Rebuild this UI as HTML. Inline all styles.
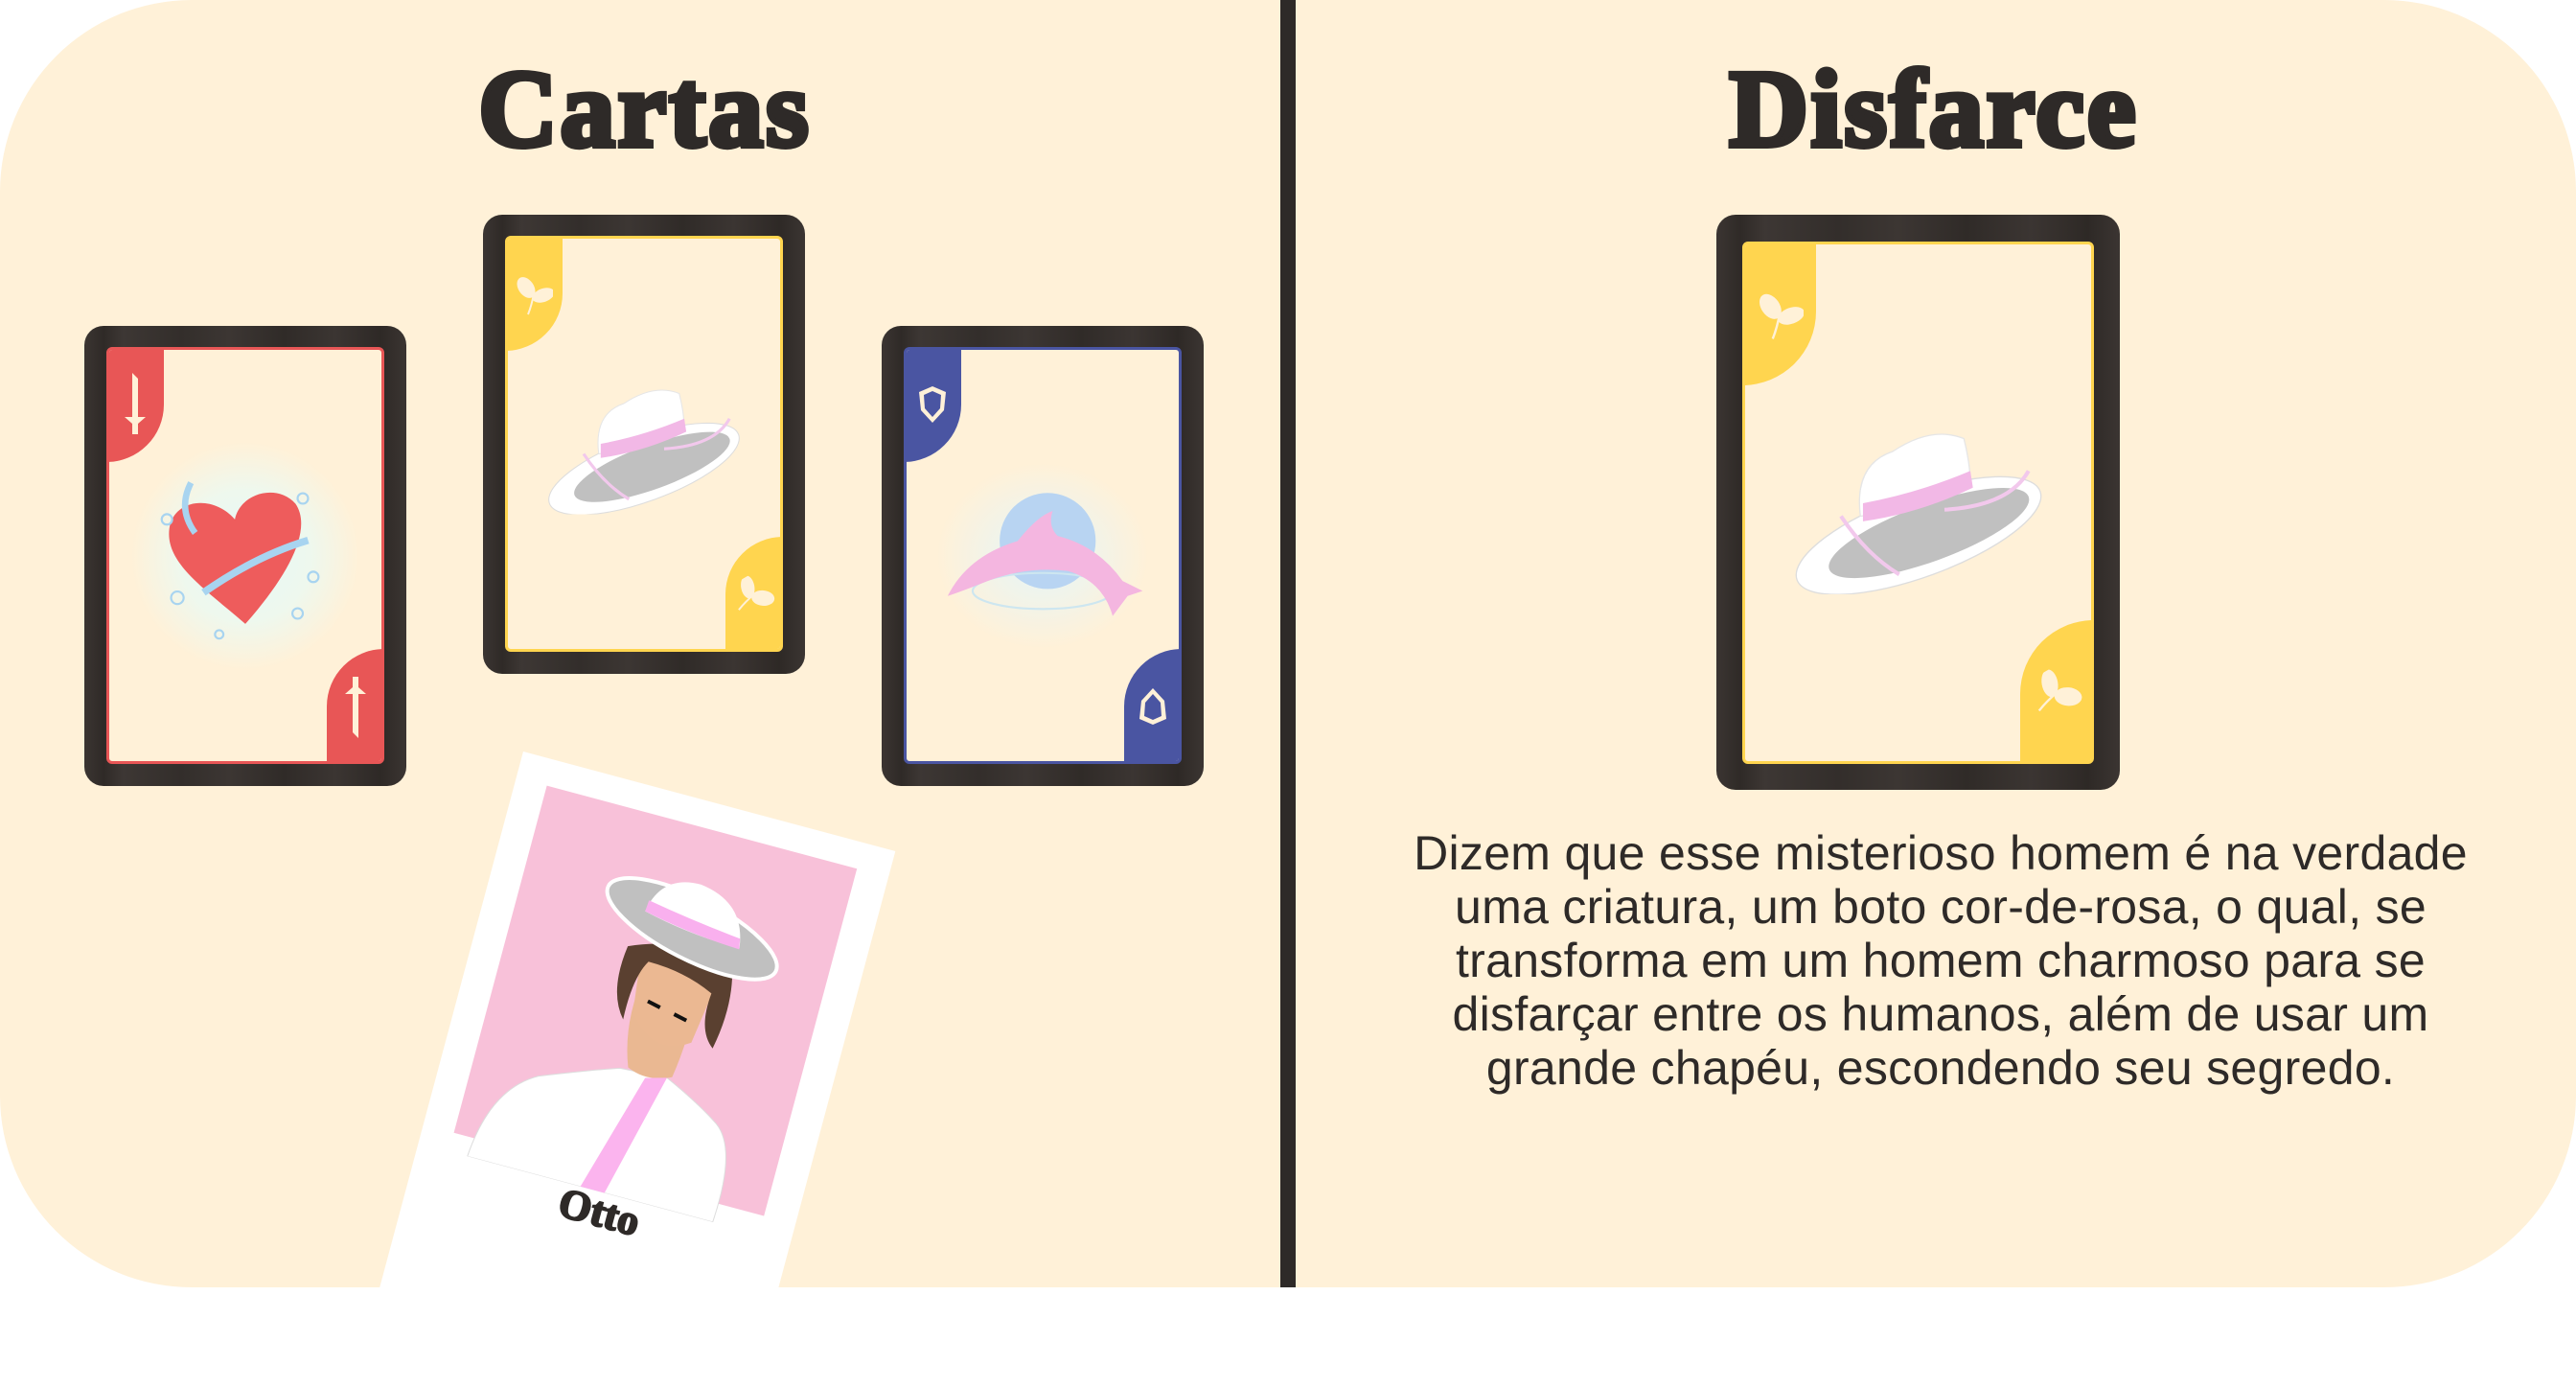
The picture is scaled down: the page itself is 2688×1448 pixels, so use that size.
<!DOCTYPE html>
<html><head><meta charset="utf-8"><style>
*{margin:0;padding:0;box-sizing:border-box}
body{width:2688px;height:1390px;background:#fff;position:relative;overflow:hidden;font-family:"Liberation Sans",sans-serif}
.cream{position:absolute;background:#fff1d8;top:0;height:1343px}
.l{left:0;width:1336px;border-radius:200px 0 0 200px}
.r{left:1352px;width:1336px;border-radius:0 200px 200px 0}
.div{position:absolute;left:1336px;top:0;width:16px;height:1343px;background:#2e2a28}
.title{position:absolute;top:48px;font-family:"Liberation Serif",serif;font-weight:bold;font-size:114px;color:#2e2a28;-webkit-text-stroke:6px #2e2a28;letter-spacing:3px;text-align:center;width:800px}
.card{position:absolute;border-radius:20px;background:linear-gradient(90deg,#3b3532 0,#2f2a27 6%,#3d3734 12%,#332e2b 30%,#3c3633 45%,#302b28 62%,#3b3532 78%,#2e2926 92%,#3b3532 100%)}
.face{position:absolute;background:#fff1d8;border:3px solid;border-radius:6px;overflow:hidden}
.tab{position:absolute;display:flex;align-items:center;justify-content:center}
.tl{left:-3px;top:-3px;border-bottom-right-radius:60px}
.br{right:-3px;bottom:-3px;border-top-left-radius:60px}
.art{position:absolute;left:50%;top:50%;transform:translate(-50%,-50%)}
.desc{position:absolute;left:1390px;width:1270px;top:862px;text-align:center;font-size:50px;line-height:56px;color:#2e2a28;letter-spacing:0.3px}
.pol{position:absolute;left:546px;top:784px;width:402px;height:580px;background:#fff;transform:rotate(15deg);transform-origin:0 0}
.pink{position:absolute;left:33px;top:28px;width:335px;height:375px;background:#f8c1d9}
.otto{position:absolute;left:0;width:100%;top:418px;text-align:center;font-family:"Liberation Serif",serif;font-weight:bold;font-size:44px;color:#2e2a28;-webkit-text-stroke:2px #2e2a28;z-index:2}
.cover{position:absolute;left:0;top:1343px;width:2688px;height:47px;background:#fff}
</style></head><body>
<div class="cream l"></div><div class="cream r"></div><div class="div"></div>
<div class="title" style="left:273px">Cartas</div>
<div class="title" style="left:1618px">Disfarce</div>

<svg width="0" height="0" style="position:absolute"><defs>
<g id="hat">
<ellipse cx="100" cy="95" rx="100" ry="32" transform="rotate(-20 100 95)" fill="#fff" stroke="#ddd"/>
<ellipse cx="108" cy="93" rx="82" ry="22" transform="rotate(-20 108 93)" fill="#c0c0c0"/>
<path d="M55 80 Q50 40 80 30 Q110 10 135 20 Q140 40 140 55 Q100 75 55 80Z" fill="#fff" stroke="#e6e6e6"/>
<path d="M57 70 Q100 62 140 45 L142 58 Q100 78 57 84Z" fill="#f2b8e6"/>
<path d="M40 80 Q60 110 85 125" stroke="#f2c8ec" stroke-width="3" fill="none"/>
<path d="M120 75 Q170 72 185 45" stroke="#f2c8ec" stroke-width="3" fill="none"/>
</g>
<g id="leaf"><ellipse cx="-8" cy="-6" rx="8" ry="12" transform="rotate(-35 -8 -6)" fill="#fff1d8"/><ellipse cx="10" cy="2" rx="12" ry="7" transform="rotate(-20 10 2)" fill="#fff1d8"/><path d="M0 0 Q-2 12 -6 22" stroke="#fff1d8" stroke-width="2" fill="none"/></g>
</defs></svg>

<!-- red card -->
<div class="card" style="left:88px;top:340px;width:336px;height:480px">
<div class="face" style="left:23px;top:22px;width:290px;height:435px;border-color:#e85656">
<div class="tab tl" style="width:60px;height:120px;background:#e85656"><svg width="30" height="70" viewBox="0 0 30 70"><path d="M12 2 L18 8 L18 50 L12 50Z M4 48 L26 48 L18 55 L18 66 L12 66 L12 55Z" fill="#fff1d8"/></svg></div>
<div class="tab br" style="width:60px;height:120px;background:#e85656"><svg width="30" height="70" viewBox="0 0 30 70" style="transform:rotate(180deg)"><path d="M12 2 L18 8 L18 50 L12 50Z M4 48 L26 48 L18 55 L18 66 L12 66 L12 55Z" fill="#fff1d8"/></svg></div>
<div class="art" style="width:240px;height:240px;border-radius:50%;background:radial-gradient(circle,#e6f8f6 0,#eef8ee 40%,rgba(255,241,216,0) 70%)">
<svg width="240" height="240" viewBox="0 0 220 220"><path d="M110 175 C70 140 30 115 38 80 C45 55 80 52 100 75 C105 50 140 40 158 60 C175 85 150 130 110 175Z" fill="#ee5c5c"/><path d="M70 145 Q120 110 170 95" stroke="#a8d4f0" stroke-width="7" fill="none"/><path d="M58 40 Q45 65 62 88" stroke="#a8d4f0" stroke-width="6" fill="none"/><circle cx="35" cy="75" r="5" fill="none" stroke="#a8d4f0" stroke-width="2"/><circle cx="165" cy="55" r="5" fill="none" stroke="#a8d4f0" stroke-width="2"/><circle cx="175" cy="130" r="5" fill="none" stroke="#a8d4f0" stroke-width="2"/><circle cx="45" cy="150" r="6" fill="none" stroke="#a8d4f0" stroke-width="2"/><circle cx="160" cy="165" r="5" fill="none" stroke="#a8d4f0" stroke-width="2"/><circle cx="85" cy="185" r="4" fill="none" stroke="#a8d4f0" stroke-width="2"/></svg></div>
</div></div>

<!-- yellow card -->
<div class="card" style="left:504px;top:224px;width:336px;height:479px">
<div class="face" style="left:23px;top:22px;width:290px;height:434px;border-color:#ffd54f">
<div class="tab tl" style="width:60px;height:120px;background:#ffd54f"><svg width="40" height="50" viewBox="-20 -25 40 50"><use href="#leaf"/></svg></div>
<div class="tab br" style="width:60px;height:120px;background:#ffd54f"><svg width="40" height="50" viewBox="-20 -25 40 50" style="transform:scaleX(-1) rotate(-60deg)"><use href="#leaf"/></svg></div>
<svg class="art" width="210" height="147" viewBox="0 0 200 140"><use href="#hat"/></svg>
</div></div>

<!-- blue card -->
<div class="card" style="left:920px;top:340px;width:336px;height:480px">
<div class="face" style="left:23px;top:22px;width:290px;height:435px;border-color:#4a55a2">
<div class="tab tl" style="width:60px;height:120px;background:#4a55a2"><svg width="34" height="44" viewBox="0 0 34 44"><path d="M17 3 L31 9 L29 28 L17 41 L5 28 L3 9Z M17 8 L26 12 L25 26 L17 35 L9 26 L8 12Z" fill="#fff1d8" fill-rule="evenodd"/></svg></div>
<div class="tab br" style="width:60px;height:120px;background:#4a55a2"><svg width="34" height="44" viewBox="0 0 34 44" style="transform:rotate(180deg)"><path d="M17 3 L31 9 L29 28 L17 41 L5 28 L3 9Z M17 8 L26 12 L25 26 L17 35 L9 26 L8 12Z" fill="#fff1d8" fill-rule="evenodd"/></svg></div>
<div class="art" style="width:240px;height:210px;background:radial-gradient(ellipse,#e4f6fa 0,rgba(255,241,216,0) 65%)">
<svg width="240" height="210" viewBox="0 0 230 200"><circle cx="120" cy="85" r="48" fill="#b8d4f2"/><ellipse cx="115" cy="135" rx="70" ry="18" fill="none" stroke="#cde6f0" stroke-width="2"/><path d="M20 140 Q40 100 90 85 Q110 60 125 55 Q120 70 130 80 Q170 90 195 125 L215 135 L200 140 L185 160 Q175 125 140 115 Q100 110 60 125 Q35 135 20 140Z" fill="#f4b6e0"/></svg></div>
</div></div>

<!-- polaroid -->
<div class="pol"><div class="pink">
<svg width="335" height="395" viewBox="0 0 335 395" style="position:absolute;left:0;top:0">
<path d="M20 395 Q25 320 70 295 Q120 275 150 265 L200 262 Q240 280 262 295 Q290 315 285 395Z" fill="#fff" stroke="#ddd"/>
<path d="M150 160 Q140 215 158 262 Q180 272 205 260 Q212 215 208 170Z" fill="#eab892"/>
<path d="M148 205 Q178 245 215 220 L225 150 L140 140Z" fill="#ebb892"/>
<path d="M125 140 Q118 190 140 215 Q138 170 150 150 Q190 150 222 165 Q218 205 238 220 Q248 170 235 130 Q180 115 125 140Z" fill="#5a4030"/>
<path d="M160 190 l14 3 M190 196 l14 3" stroke="#111" stroke-width="4"/>
<path d="M178 268 L200 262 L168 395 L142 395Z" fill="#fbb4ee"/>
<ellipse cx="185" cy="105" rx="98" ry="32" transform="rotate(12 185 105)" fill="#c0c0c0" stroke="#fff" stroke-width="4"/>
<path d="M133 100 Q140 58 182 58 Q232 64 238 112 Q185 112 133 100Z" fill="#fff"/>
<path d="M134 88 Q185 97 236 102 L238 113 Q185 111 133 100Z" fill="#f9b0ee"/>
</svg></div>
<div class="otto">Otto</div></div>

<!-- big card -->
<div class="card" style="left:1791px;top:224px;width:421px;height:600px">
<div class="face" style="left:27px;top:28px;width:367px;height:545px;border-color:#ffd54f">
<div class="tab tl" style="width:77px;height:150px;border-bottom-right-radius:77px;background:#ffd54f"><svg width="50" height="60" viewBox="-20 -25 40 50"><use href="#leaf"/></svg></div>
<div class="tab br" style="width:77px;height:150px;border-top-left-radius:77px;background:#ffd54f"><svg width="50" height="60" viewBox="-20 -25 40 50" style="transform:scaleX(-1) rotate(-60deg)"><use href="#leaf"/></svg></div>
<svg class="art" width="270" height="190" viewBox="0 0 200 140"><use href="#hat"/></svg>
</div></div>

<div class="desc">Dizem que esse misterioso homem é na verdade<br>uma criatura, um boto cor-de-rosa, o qual, se<br>transforma em um homem charmoso para se<br>disfarçar entre os humanos, além de usar um<br>grande chapéu, escondendo seu segredo.</div>
<div class="cover"></div>
</body></html>
